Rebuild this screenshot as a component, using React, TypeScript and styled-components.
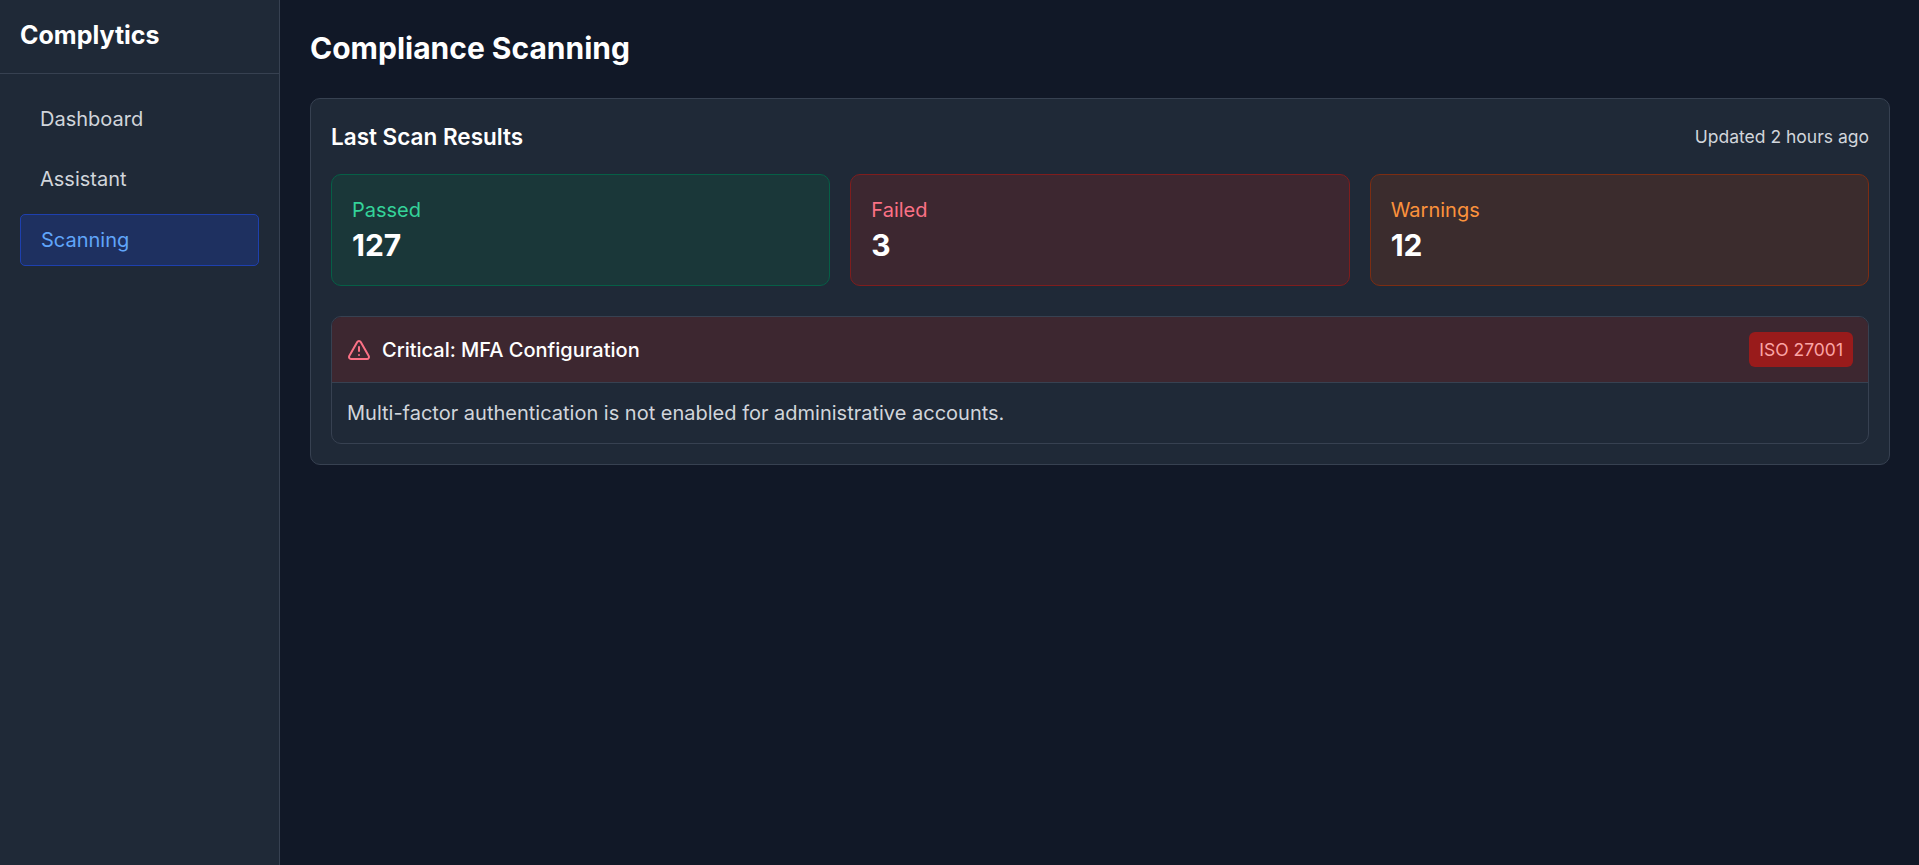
import styled, { createGlobalStyle } from 'styled-components';
import { TriangleAlert } from 'lucide-react';

const GlobalStyle = createGlobalStyle`
  * { box-sizing: border-box; }
  html, body { margin: 0; padding: 0; }
  body {
    background: #111827;
    color: #d1d5db;
    font-family: Inter, "Liberation Sans", sans-serif;
  }
`;

const tones = {
  green: { bg: '#1a3739', border: '#065f46', text: '#34d399' },
  red: { bg: '#3d2730', border: '#7f1d1d', text: '#fb7185' },
  orange: { bg: '#3b2c2d', border: '#7c2d12', text: '#fb923c' },
};

type Tone = keyof typeof tones;

const Shell = styled.div`
  display: flex;
  min-height: 865px;
`;

const Sidebar = styled.aside`
  width: 280px;
  flex-shrink: 0;
  background: #1f2937;
  border-right: 1px solid #374151;
`;

const Brand = styled.div`
  height: 74px;
  padding: 20px;
  border-bottom: 1px solid #374151;
  font-size: 25px;
  font-weight: 700;
  line-height: 30px;
  color: #fff;
`;

const Nav = styled.nav`
  display: flex;
  flex-direction: column;
  gap: 10px;
  padding: 20px;
`;

const NavItem = styled.a<{ $active?: boolean }>`
  display: block;
  padding: 12px 20px;
  border-radius: 5px;
  font-size: 20px;
  line-height: 26px;
  color: ${(p) => (p.$active ? '#60a5fa' : '#d1d5db')};
  background: ${(p) => (p.$active ? '#1e3060' : 'transparent')};
  border: ${(p) => (p.$active ? '1px solid #1e40af' : 'none')};
`;

const Main = styled.main`
  flex: 1;
  padding: 30px 29px 30px 30px;
`;

const PageTitle = styled.h1`
  margin: 0 0 32px;
  font-size: 30px;
  font-weight: 700;
  line-height: 36px;
  color: #fff;
`;

const Card = styled.section`
  padding: 20px;
  background: #1f2937;
  border: 1px solid #374151;
  border-radius: 10px;
`;

const CardHeader = styled.div`
  display: flex;
  justify-content: space-between;
  align-items: center;
  margin-bottom: 20px;
`;

const CardTitle = styled.h2`
  margin: 0;
  font-size: 22.5px;
  font-weight: 600;
  line-height: 35px;
  color: #fff;
`;

const Updated = styled.span`
  font-size: 17.5px;
  color: #d1d5db;
`;

const Stats = styled.div`
  display: grid;
  grid-template-columns: repeat(3, 1fr);
  gap: 20px;
  margin-bottom: 30px;
`;

const Stat = styled.div<{ $tone: Tone }>`
  padding: 20px;
  border-radius: 10px;
  background: ${(p) => tones[p.$tone].bg};
  border: 1px solid ${(p) => tones[p.$tone].border};
`;

const StatLabel = styled.div<{ $tone: Tone }>`
  font-size: 20px;
  line-height: 30px;
  color: ${(p) => tones[p.$tone].text};
`;

const StatValue = styled.div`
  font-size: 30px;
  font-weight: 700;
  line-height: 40px;
  color: #fff;
`;

const Finding = styled.div`
  border: 1px solid #374151;
  border-radius: 10px;
  overflow: hidden;
`;

const FindingHeader = styled.div`
  display: flex;
  justify-content: space-between;
  align-items: center;
  height: 66px;
  padding: 0 15px;
  background: #3d2730;
  border-bottom: 1px solid #374151;
`;

const FindingTitle = styled.div`
  display: flex;
  align-items: center;
  gap: 11px;
  font-size: 20px;
  font-weight: 500;
  color: #fff;
  svg { color: #fb7185; }
`;

const Badge = styled.span`
  padding: 6px 10px;
  border-radius: 6px;
  background: #991b1b;
  color: #fca5a5;
  font-size: 17.5px;
  line-height: 23px;
`;

const FindingBody = styled.p`
  margin: 0;
  padding: 15px;
  font-size: 20px;
  line-height: 30px;
  color: #d1d5db;
`;

const stats: { label: string; value: number; tone: Tone }[] = [
  { label: 'Passed', value: 127, tone: 'green' },
  { label: 'Failed', value: 3, tone: 'red' },
  { label: 'Warnings', value: 12, tone: 'orange' },
];

export default function App() {
  return (
    <>
      <GlobalStyle />
      <Shell>
        <Sidebar>
          <Brand>Complytics</Brand>
          <Nav>
            <NavItem>Dashboard</NavItem>
            <NavItem>Assistant</NavItem>
            <NavItem $active>Scanning</NavItem>
          </Nav>
        </Sidebar>
        <Main>
          <PageTitle>Compliance Scanning</PageTitle>
          <Card>
            <CardHeader>
              <CardTitle>Last Scan Results</CardTitle>
              <Updated>Updated 2 hours ago</Updated>
            </CardHeader>
            <Stats>
              {stats.map((s) => (
                <Stat key={s.label} $tone={s.tone}>
                  <StatLabel $tone={s.tone}>{s.label}</StatLabel>
                  <StatValue>{s.value}</StatValue>
                </Stat>
              ))}
            </Stats>
            <Finding>
              <FindingHeader>
                <FindingTitle>
                  <TriangleAlert size={24} />
                  Critical: MFA Configuration
                </FindingTitle>
                <Badge>ISO 27001</Badge>
              </FindingHeader>
              <FindingBody>Multi-factor authentication is not enabled for administrative accounts.</FindingBody>
            </Finding>
          </Card>
        </Main>
      </Shell>
    </>
  );
}
